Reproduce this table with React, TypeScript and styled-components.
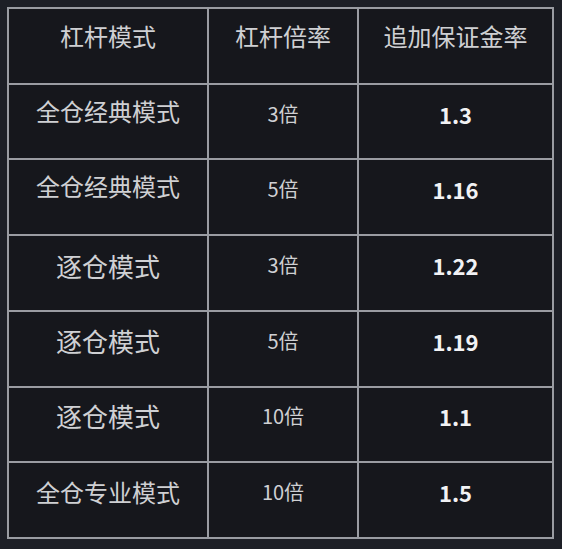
import React from "react";
import styled, { createGlobalStyle } from "styled-components";

const Global = createGlobalStyle`
  html, body {
    margin: 0;
    padding: 0;
    background: #1d1f26;
    width: 562px;
    height: 549px;
    overflow: hidden;
  }
  body {
    font-family: "Noto Sans CJK SC", "Noto Sans", sans-serif;
  }
`;

const Page = styled.div`
  padding: 7px 0 0 7px;
`;

const Grid = styled.div`
  display: grid;
  grid-template-columns: 198px 148px 193px;
  grid-template-rows: repeat(7, 1fr);
  gap: 2px;
  padding: 2px;
  width: 543px;
  height: 528px;
  background: #9a9ca2;
`;

const Cell = styled.div<{ $size: number; $lift: number; $bold?: boolean; $color?: string }>`
  background: #16171c;
  display: flex;
  align-items: center;
  justify-content: center;
  padding-bottom: ${(p) => p.$lift * 2}px;
  font-size: ${(p) => p.$size}px;
  font-weight: ${(p) => (p.$bold ? 700 : 400)};
  color: ${(p) => p.$color ?? "#cfd0d3"};
  line-height: 1;
  white-space: nowrap;
`;

type Row = { mode: string; modeSize: number; modeLift: number; lev: string; rate: string };

const rows: Row[] = [
  { mode: "全仓经典模式", modeSize: 24, modeLift: 11, lev: "3倍", rate: "1.3" },
  { mode: "全仓经典模式", modeSize: 24, modeLift: 11, lev: "5倍", rate: "1.16" },
  { mode: "逐仓模式", modeSize: 26, modeLift: 7, lev: "3倍", rate: "1.22" },
  { mode: "逐仓模式", modeSize: 26, modeLift: 8, lev: "5倍", rate: "1.19" },
  { mode: "逐仓模式", modeSize: 26, modeLift: 8, lev: "10倍", rate: "1.1" },
  { mode: "全仓专业模式", modeSize: 24, modeLift: 8, lev: "10倍", rate: "1.5" },
];

export default function App() {
  return (
    <>
      <Global />
      <Page>
        <Grid>
          <Cell $size={24} $lift={10}>杠杆模式</Cell>
          <Cell $size={24} $lift={10}>杠杆倍率</Cell>
          <Cell $size={24} $lift={10}>追加保证金率</Cell>
          {rows.map((r, i) => (
            <React.Fragment key={i}>
              <Cell $size={r.modeSize} $lift={r.modeLift}>{r.mode}</Cell>
              <Cell $size={20} $lift={8}>{r.lev}</Cell>
              <Cell $size={22} $lift={8} $bold $color="#f2f2f4">{r.rate}</Cell>
            </React.Fragment>
          ))}
        </Grid>
      </Page>
    </>
  );
}
